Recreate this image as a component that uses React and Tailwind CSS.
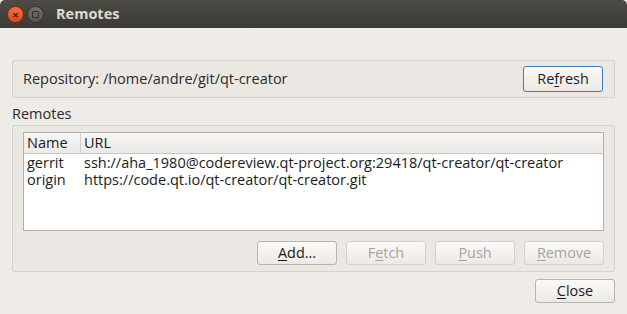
import React from "react";

const font = { fontFamily: '"Open Sans", "Noto Sans", sans-serif' };

function Btn({ children, disabled, focused, className = "" }) {
    return (
        <button
            className={`h-[24px] w-[80px] rounded-[3px] border text-[14.4px] leading-none bg-gradient-to-b from-[#fbfaf9] to-[#ece9e5] ${
                focused ? "border-[#3d7fb8]" : "border-[#b9b4ad]"
            } ${disabled ? "text-[#a6a39f] border-[#d3cfca] from-[#f2f0ed] to-[#ebe8e4]" : "text-[#1b1b1b]"} ${className}`}
        >
            {children}
        </button>
    );
}

export default function App() {
    return (
        <div className="w-[627px] h-[314px] bg-[#efebe7] flex flex-col overflow-hidden" style={font}>
            <div className="h-[28px] bg-gradient-to-b from-[#4d4b45] to-[#3b3a35] flex items-center px-[7px] gap-[3px] rounded-t-[5px]">
                <div className="w-[17px] h-[17px] rounded-full bg-gradient-to-b from-[#f5703f] to-[#de4717] border border-[#7a2a10] flex items-center justify-center text-[#3a1505] text-[11px] font-bold leading-none">
                    ×
                </div>
                <div className="w-[17px] h-[17px] rounded-full bg-gradient-to-b from-[#75736d] to-[#58564f] border border-[#33322e] flex items-center justify-center">
                    <div className="w-[7px] h-[7px] border-[1.5px] border-[#2f2e2a] rounded-[1px]" />
                </div>
                <span className="ml-[9px] text-[#dfdbd2] text-[14.5px] font-bold">Remotes</span>
            </div>

            <div className="flex flex-col px-[12px] pt-[32px]">
                <div className="h-[38px] border border-[#d6d2cc] bg-[#ebe8e4] rounded-[2px] flex items-center justify-between pl-[10px] pr-[11px]">
                    <span className="text-[14.5px] text-[#2b2b2b]">Repository: /home/andre/git/qt-creator</span>
                    <Btn focused className="h-[26px]">
                        Re<span className="underline underline-offset-2">f</span>resh
                    </Btn>
                </div>

                <div className="text-[14.5px] text-[#2b2b2b] mt-[6px] leading-[19px]">Remotes</div>

                <div className="mt-[2px] h-[147px] border border-[#d6d2cc] bg-[#ebe8e4] rounded-[2px] flex flex-col px-[10px] pt-[6px]">
                    <div className="h-[99px] bg-white border border-[#b3afa9] flex flex-col text-[14.5px] text-[#1b1b1b]">
                        <div className="h-[21px] shrink-0 flex bg-gradient-to-b from-[#f7f6f5] to-[#eceae7] border-b border-[#c9c5bf]">
                            <div className="w-[57px] pl-[3px] flex items-center border-r border-[#d3cfca]">Name</div>
                            <div className="pl-[3px] flex items-center">URL</div>
                        </div>
                        <div className="flex leading-[17px]">
                            <div className="w-[57px] pl-[3px]">gerrit</div>
                            <div className="pl-[3px]">ssh://aha_1980@codereview.qt-project.org:29418/qt-creator/qt-creator</div>
                        </div>
                        <div className="flex leading-[17px]">
                            <div className="w-[57px] pl-[3px]">origin</div>
                            <div className="pl-[3px]">https://code.qt.io/qt-creator/qt-creator.git</div>
                        </div>
                    </div>
                    <div className="flex justify-end gap-[9px] mt-[10px]">
                        <Btn>
                            <span className="underline underline-offset-2">A</span>dd...
                        </Btn>
                        <Btn disabled>
                            F<span className="underline underline-offset-2">e</span>tch
                        </Btn>
                        <Btn disabled>
                            <span className="underline underline-offset-2">P</span>ush
                        </Btn>
                        <Btn disabled>
                            <span className="underline underline-offset-2">R</span>emove
                        </Btn>
                    </div>
                </div>

                <div className="flex justify-end mt-[7px]">
                    <Btn>
                        <span className="underline underline-offset-2">C</span>lose
                    </Btn>
                </div>
            </div>
        </div>
    );
}
